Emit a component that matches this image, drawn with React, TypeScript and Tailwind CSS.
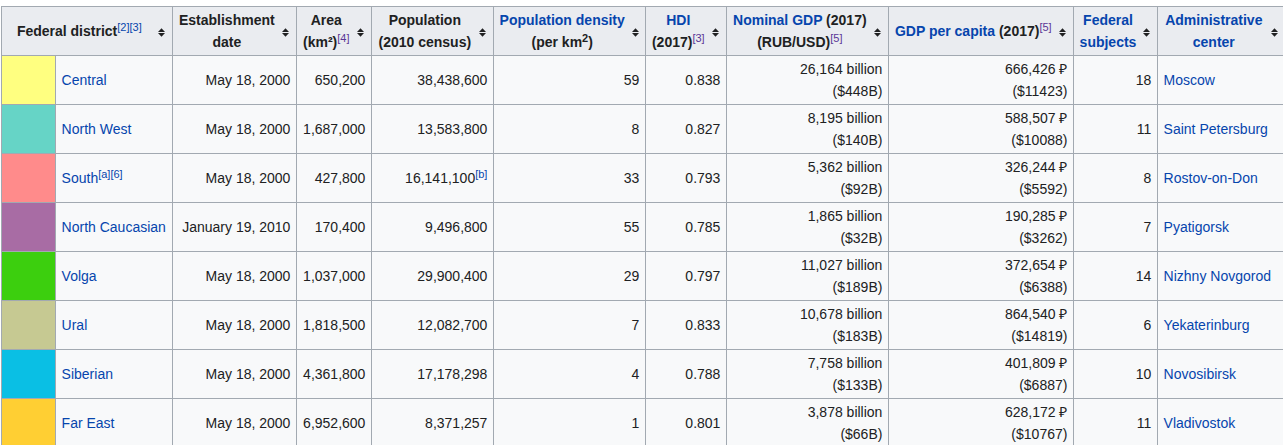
import React from "react";

type Row = {
  color: string;
  name: string;
  nameSup?: string;
  date: string;
  area: string;
  pop: string;
  popSup?: string;
  dens: string;
  hdi: string;
  gdp: string;
  gdpUsd: string;
  pc: string;
  pcUsd: string;
  subj: string;
  center: string;
};

const rows: Row[] = [
  { color: "#ffff80", name: "Central", date: "May 18, 2000", area: "650,200", pop: "38,438,600", dens: "59", hdi: "0.838", gdp: "26,164 billion", gdpUsd: "($448B)", pc: "666,426 ₽", pcUsd: "($11423)", subj: "18", center: "Moscow" },
  { color: "#66d4c6", name: "North West", date: "May 18, 2000", area: "1,687,000", pop: "13,583,800", dens: "8", hdi: "0.827", gdp: "8,195 billion", gdpUsd: "($140B)", pc: "588,507 ₽", pcUsd: "($10088)", subj: "11", center: "Saint Petersburg" },
  { color: "#ff8b8b", name: "South", nameSup: "[a][6]", date: "May 18, 2000", area: "427,800", pop: "16,141,100", popSup: "[b]", dens: "33", hdi: "0.793", gdp: "5,362 billion", gdpUsd: "($92B)", pc: "326,244 ₽", pcUsd: "($5592)", subj: "8", center: "Rostov-on-Don" },
  { color: "#a86ca4", name: "North Caucasian", date: "January 19, 2010", area: "170,400", pop: "9,496,800", dens: "55", hdi: "0.785", gdp: "1,865 billion", gdpUsd: "($32B)", pc: "190,285 ₽", pcUsd: "($3262)", subj: "7", center: "Pyatigorsk" },
  { color: "#3ccf0e", name: "Volga", date: "May 18, 2000", area: "1,037,000", pop: "29,900,400", dens: "29", hdi: "0.797", gdp: "11,027 billion", gdpUsd: "($189B)", pc: "372,654 ₽", pcUsd: "($6388)", subj: "14", center: "Nizhny Novgorod" },
  { color: "#c6c992", name: "Ural", date: "May 18, 2000", area: "1,818,500", pop: "12,082,700", dens: "7", hdi: "0.833", gdp: "10,678 billion", gdpUsd: "($183B)", pc: "864,540 ₽", pcUsd: "($14819)", subj: "6", center: "Yekaterinburg" },
  { color: "#0abfe4", name: "Siberian", date: "May 18, 2000", area: "4,361,800", pop: "17,178,298", dens: "4", hdi: "0.788", gdp: "7,758 billion", gdpUsd: "($133B)", pc: "401,809 ₽", pcUsd: "($6887)", subj: "10", center: "Novosibirsk" },
  { color: "#ffcf33", name: "Far East", date: "May 18, 2000", area: "6,952,600", pop: "8,371,257", dens: "1", hdi: "0.801", gdp: "3,878 billion", gdpUsd: "($66B)", pc: "628,172 ₽", pcUsd: "($10767)", subj: "11", center: "Vladivostok" },
];

function Sup({ children, visited }: { children: React.ReactNode; visited?: boolean }) {
  return (
    <span
      className={`relative -top-[0.45em] text-[11px] leading-none font-normal ${
        visited ? "text-[#5a3696]" : "text-[#0645ad]"
      }`}
    >
      {children}
    </span>
  );
}

function SortIcon() {
  return (
    <span className="flex w-[21px] shrink-0 items-center justify-center">
      <svg width="7" height="9" viewBox="0 0 7 9" className="mt-[2px]">
        <polygon points="0,4 3.5,0.3 7,4" fill="#202122" />
        <polygon points="0,5 7,5 3.5,8.7" fill="#202122" />
      </svg>
    </span>
  );
}

function Th({ children, colSpan }: { children: React.ReactNode; colSpan?: number }) {
  return (
    <th
      colSpan={colSpan}
      className="border border-[#a2a9b1] bg-[#eaecf0] py-[2px] pl-[5.6px] pr-0 align-middle font-bold text-[#202122]"
    >
      <div className="flex items-center">
        <div className="flex-1 whitespace-nowrap text-center">{children}</div>
        <SortIcon />
      </div>
    </th>
  );
}

const td = "border border-[#a2a9b1] py-[2px] px-[5.6px] align-middle whitespace-nowrap";

export default function App() {
  return (
    <div className="h-[445px] w-[1283px] overflow-hidden bg-white pt-[6px] pl-px font-['Liberation_Sans',Arial,sans-serif] text-[14px] leading-[22px] text-[#202122]">
      <table className="table-fixed border-collapse w-[1284px]">
        <colgroup>
          <col className="w-[54px]" />
          <col className="w-[117px]" />
          <col className="w-[124px]" />
          <col className="w-[75px]" />
          <col className="w-[122px]" />
          <col className="w-[152px]" />
          <col className="w-[81px]" />
          <col className="w-[162px]" />
          <col className="w-[185px]" />
          <col className="w-[84px]" />
          <col className="w-[128px]" />
        </colgroup>
        <thead>
          <tr>
            <Th colSpan={2}>
              Federal district<Sup>[2][3]</Sup>
            </Th>
            <Th>
              Establishment
              <br />
              date
            </Th>
            <Th>
              Area
              <br />
              (km²)<Sup visited>[4]</Sup>
            </Th>
            <Th>
              Population
              <br />
              (2010 census)
            </Th>
            <Th>
              <span className="text-[#0645ad]">Population density</span>
              <br />
              (per km<span className="relative -top-[0.45em] text-[11px] leading-none">2</span>)
            </Th>
            <Th>
              <span className="text-[#0645ad]">HDI</span>
              <br />
              (2017)<Sup visited>[3]</Sup>
            </Th>
            <Th>
              <span className="text-[#0645ad]">Nominal GDP</span> (2017)
              <br />
              (RUB/USD)<Sup visited>[5]</Sup>
            </Th>
            <Th>
              <span className="text-[#0645ad]">GDP per capita</span> (2017)<Sup visited>[5]</Sup>
            </Th>
            <Th>
              <span className="text-[#0645ad]">
                Federal
                <br />
                subjects
              </span>
            </Th>
            <Th>
              <span className="text-[#0645ad]">
                Administrative
                <br />
                center
              </span>
            </Th>
          </tr>
        </thead>
        <tbody>
          {rows.map((r) => (
            <tr key={r.name} className="bg-[#f8f9fa]">
              <td className={td} style={{ backgroundColor: r.color }}></td>
              <td className={`${td} text-left`}>
                <span className="text-[#0645ad]">{r.name}</span>
                {r.nameSup && <Sup>{r.nameSup}</Sup>}
              </td>
              <td className={`${td} text-right`}>{r.date}</td>
              <td className={`${td} text-right`}>{r.area}</td>
              <td className={`${td} text-right`}>
                {r.pop}
                {r.popSup && <Sup>{r.popSup}</Sup>}
              </td>
              <td className={`${td} text-right`}>{r.dens}</td>
              <td className={`${td} text-right`}>{r.hdi}</td>
              <td className={`${td} text-right`}>
                {r.gdp}
                <br />
                {r.gdpUsd}
              </td>
              <td className={`${td} text-right`}>
                {r.pc}
                <br />
                {r.pcUsd}
              </td>
              <td className={`${td} text-right`}>{r.subj}</td>
              <td className={`${td} text-left`}>
                <span className="text-[#0645ad]">{r.center}</span>
              </td>
            </tr>
          ))}
        </tbody>
      </table>
    </div>
  );
}
